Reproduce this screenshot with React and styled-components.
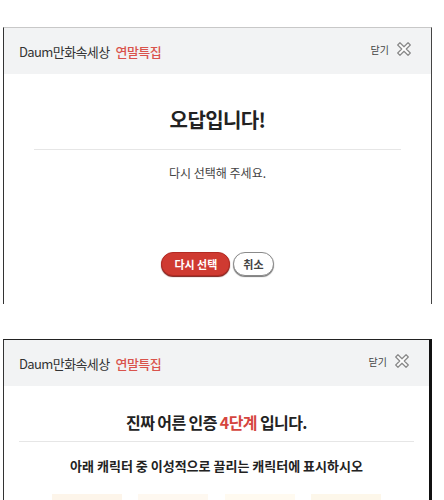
import styled, { createGlobalStyle } from "styled-components";

const Global = createGlobalStyle`
    body {
        margin: 0;
        background: #fff;
        font-family: "Noto Sans CJK KR", "Noto Sans", sans-serif;
    }
`;

function CloseIcon() {
    return (
        <svg width="18" height="18" viewBox="0 0 20 20">
            <path
                d="M3 5.5 L5.5 3 L10 7.5 L14.5 3 L17 5.5 L12.5 10 L17 14.5 L14.5 17 L10 12.5 L5.5 17 L3 14.5 L7.5 10 Z"
                fill="#fff"
                stroke="#8a8a8a"
                strokeWidth="1.4"
                strokeLinejoin="round"
            />
        </svg>
    );
}

function Header() {
    return (
        <Head>
            <Brand>
                Daum만화속세상<Tag>연말특집</Tag>
            </Brand>
            <Close>
                닫기 <CloseIcon />
            </Close>
        </Head>
    );
}

function App() {
    return (
        <>
            <Global />
            <Page>
                <Panel $height={277} $thick={false}>
                    <Header />
                    <Body>
                        <Title $size={20}>오답입니다!</Title>
                        <Divider $inset={30} />
                        <Message>다시 선택해 주세요.</Message>
                        <Buttons>
                            <Button $primary>다시 선택</Button>
                            <Button>취소</Button>
                        </Buttons>
                    </Body>
                </Panel>

                <Panel $height={180} $thick>
                    <Header />
                    <Body>
                        <Title $size={16} $pad={23}>
                            진짜 어른 인증 <Red>4단계</Red> 입니다.
                        </Title>
                        <Divider $inset={15} $gap={6} />
                        <Question>아래 캐릭터 중 이성적으로 끌리는 캐릭터에 표시하시오</Question>
                        <Characters>
                            <Thumb $color="#fdf5ea" />
                            <Thumb $color="#fef8f0" />
                            <Thumb $color="#fffaf0" />
                            <Thumb $color="#fdf7ea" />
                        </Characters>
                    </Body>
                </Panel>
            </Page>
        </>
    );
}

export default App;

const Page = styled.div`
    display: flex;
    flex-direction: column;
    gap: 35px;
    padding: 27px 0 0 3px;
`;

const Panel = styled.div`
    width: 429px;
    height: ${(p) => p.$height}px;
    box-sizing: border-box;
    border-top: 1px solid ${(p) => (p.$thick ? "#222" : "#c8c8c8")};
    border-left: 1px solid #333;
    border-right: ${(p) => (p.$thick ? "3px solid #111" : "1px solid #444")};
    background: #fff;
    display: flex;
    flex-direction: column;
    overflow: hidden;
`;

const Head = styled.div`
    height: 46px;
    flex-shrink: 0;
    background: #f2f3f4;
    display: flex;
    align-items: center;
    justify-content: space-between;
    padding: 0 18px 0 15px;
`;

const Brand = styled.div`
    font-size: 13px;
    color: #333;
    letter-spacing: -0.6px;
`;

const Red = styled.span`
    color: #d5453e;
    font-weight: 700;
`;

const Tag = styled(Red)`
    margin-left: 6px;
    color: #d9534c;
    font-weight: 500;
`;

const Close = styled.div`
    display: flex;
    align-items: center;
    gap: 6px;
    font-size: 10px;
    color: #444;
    margin-top: -4px;
`;

const Body = styled.div`
    display: flex;
    flex-direction: column;
    align-items: center;
`;

const Title = styled.div`
    font-size: ${(p) => p.$size}px;
    font-weight: 700;
    color: #222;
    letter-spacing: -0.6px;
    padding-top: ${(p) => p.$pad || 33}px;
    line-height: 26px;
`;

const Divider = styled.div`
    align-self: stretch;
    height: 1px;
    background: #e6e6e6;
    margin: ${(p) => p.$gap || 16}px ${(p) => p.$inset}px 0;
`;

const Message = styled.div`
    font-size: 12px;
    color: #444;
    margin-top: 14px;
`;

const Question = styled.div`
    font-size: 13px;
    font-weight: 700;
    color: #222;
    margin-top: 14px;
`;

const Buttons = styled.div`
    display: flex;
    gap: 3px;
    margin-top: 71px;
`;

const Button = styled.div`
    height: 24px;
    box-sizing: border-box;
    padding: 0 ${(p) => (p.$primary ? 12 : 9)}px;
    border-radius: 12px;
    display: flex;
    align-items: center;
    font-size: 11px;
    font-weight: 700;
    color: ${(p) => (p.$primary ? "#fff" : "#444")};
    background: ${(p) => (p.$primary ? "#cf3a31" : "#fff")};
    border: 1px solid ${(p) => (p.$primary ? "#b32a23" : "#8a8a8a")};
    box-shadow: 0 1px 1px ${(p) => (p.$primary ? "#7a1d18" : "#777")};
`;

const Characters = styled.div`
    display: flex;
    justify-content: space-around;
    align-self: stretch;
    margin-top: 19px;
    padding: 0 40px;
`;

const Thumb = styled.div`
    width: 70px;
    height: 60px;
    background: ${(p) => p.$color};
`;
